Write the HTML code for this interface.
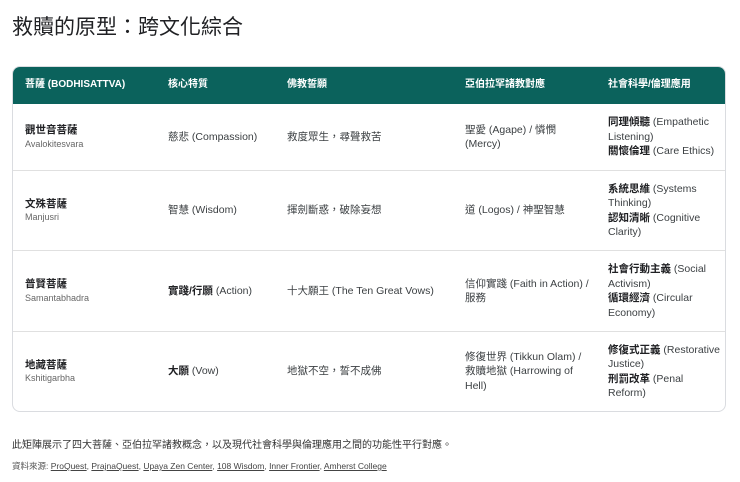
<!DOCTYPE html>
<html><head><meta charset="utf-8"><style>
body{margin:0;background:#fff;font-family:"Liberation Sans","Noto Sans CJK TC",sans-serif;color:#202124;width:740px;height:482px;overflow:hidden;position:relative}
h1{position:absolute;left:12px;top:13px;margin:0;font-size:21px;font-weight:400;line-height:30px;font-family:"Liberation Sans","Noto Sans CJK TC",sans-serif}
.box{position:absolute;left:12px;top:66px;width:714px;height:346px;border:1px solid #dadce0;border-radius:8px;overflow:hidden;box-sizing:border-box}
table{border-collapse:collapse;width:100%;table-layout:fixed;font-size:10.5px;line-height:14.5px}
th{background:#0b625c;color:#fff;text-align:left;font-weight:700;height:37px;padding:0 6px 0 12px;font-size:10px}
td{padding:0 4px 0 12px;border-top:1px solid #e0e0e0;vertical-align:middle;color:#3c4043}
tr.r1 td{height:66px;border-top:none}
tr.r2 td{height:79px}
tr.r3 td{height:80px}
tr.r4 td{height:79px}
b{color:#202124}
.sub{color:#666;font-size:9px;display:block;margin-top:0px;line-height:13px}
.note{position:absolute;left:12px;top:436px;font-size:10px;color:#333}
.src{position:absolute;left:12px;top:460px;font-size:8.5px;color:#555}
.src u{color:#444}
</style></head><body>
<h1>救贖的原型：跨文化綜合</h1>
<div class="box"><table>
<colgroup><col style="width:143px"><col style="width:119px"><col style="width:178px"><col style="width:143px"><col></colgroup>
<tr><th>菩薩 (BODHISATTVA)</th><th>核心特質</th><th>佛教誓願</th><th>亞伯拉罕諸教對應</th><th>社會科學/倫理應用</th></tr>
<tr class="r1"><td><b>觀世音菩薩</b><span class="sub">Avalokitesvara</span></td><td>慈悲 (Compassion)</td><td>救度眾生，尋聲救苦</td><td>聖愛 (Agape) / 憐憫 (Mercy)</td><td><b>同理傾聽</b> (Empathetic Listening)<br><b>關懷倫理</b> (Care Ethics)</td></tr>
<tr class="r2"><td><b>文殊菩薩</b><span class="sub">Manjusri</span></td><td>智慧 (Wisdom)</td><td>揮劍斷惑，破除妄想</td><td>道 (Logos) / 神聖智慧</td><td><b>系統思維</b> (Systems Thinking)<br><b>認知清晰</b> (Cognitive Clarity)</td></tr>
<tr class="r3"><td><b>普賢菩薩</b><span class="sub">Samantabhadra</span></td><td><b>實踐/行願</b> (Action)</td><td>十大願王 (The Ten Great Vows)</td><td>信仰實踐 (Faith in Action) / 服務</td><td><b>社會行動主義</b> (Social Activism)<br><b>循環經濟</b> (Circular Economy)</td></tr>
<tr class="r4"><td><b>地藏菩薩</b><span class="sub">Kshitigarbha</span></td><td><b>大願</b> (Vow)</td><td>地獄不空，誓不成佛</td><td>修復世界 (Tikkun Olam) / 救贖地獄 (Harrowing of Hell)</td><td><b>修復式正義</b> (Restorative Justice)<br><b>刑罰改革</b> (Penal Reform)</td></tr>
</table></div>
<div class="note">此矩陣展示了四大菩薩、亞伯拉罕諸教概念，以及現代社會科學與倫理應用之間的功能性平行對應。</div>
<div class="src">資料來源: <u>ProQuest</u>, <u>PrajnaQuest</u>, <u>Upaya Zen Center</u>, <u>108 Wisdom</u>, <u>Inner Frontier</u>, <u>Amherst College</u></div>
</body></html>
